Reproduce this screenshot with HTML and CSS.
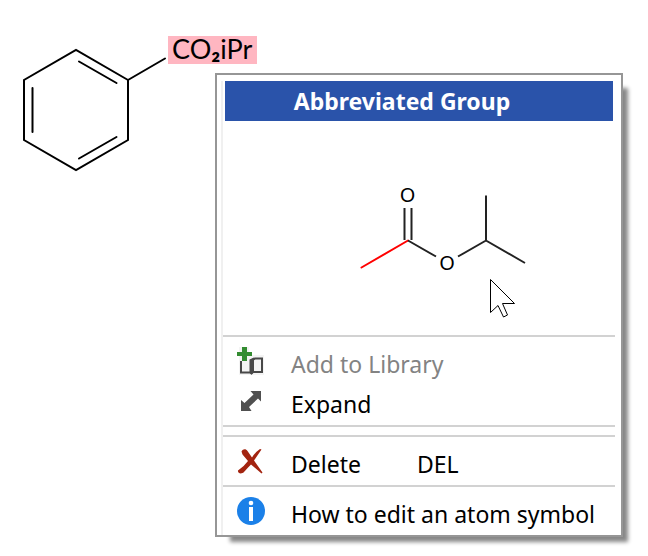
FILE: index.html
```html
<!DOCTYPE html>
<html lang="en">
<head>
<meta charset="utf-8">
<title>Structure editor</title>
<link rel="stylesheet" href="styles.css">
</head>
<body>
<main class="canvas">
  <svg class="molecule" width="270" height="190" viewBox="0 0 270 190" role="img" aria-label="Isopropyl benzoate">
    <rect class="highlight" x="168" y="36" width="89" height="28"/>
    <path class="bond" d="M128 80 76 50 24 80V140L76 170 128 140ZM128 80 165 58.500M116.500 83 79 61.500M32.500 88V132M79 158.500 116.500 137"/>
    <text class="group-label" x="172" y="59">CO<tspan class="subscript">₂</tspan>iPr</text>
  </svg>

  <div class="menu" role="menu" aria-labelledby="menu-title">
    <div class="menu-body">
      <h1 class="menu-title" id="menu-title">Abbreviated Group</h1>
      <div class="preview">
        <svg width="180" height="140" viewBox="355 180 180 140" role="img" aria-label="Isopropyl ester group">
          <path class="attachment" d="M361.500 267.500 408 240.500"/>
          <path class="preview-bond" d="M404.500 208V240M411.500 208V240M408 240.500 436 256.500M458 256.500 486 240.500M486 195.500V240.500L525 263"/>
          <text class="atom" x="407.500" y="202">O</text>
          <text class="atom" x="447" y="270">O</text>
          <path class="pointer" d="M490.500 279.500V312.500L498 305.500 503.500 317 507.500 315 502.500 303.500H514.500Z"/>
        </svg>
      </div>
      <hr class="separator">
      <button class="item" type="button" role="menuitem" disabled>
        <svg class="icon" width="28" height="28" viewBox="0 0 28 28" aria-hidden="true">
          <path fill="#f4f4f4" d="M2 0h10v8h15v20H2z"/>
          <path fill="none" stroke="#484848" stroke-width="2" d="M4 14V25.500H13L14.500 26.500 16 25H25V11.500H18L15 13"/>
          <path fill="#484848" d="M12.500 12.500 17 10.500V25L14.500 27.500 12.500 25z"/>
          <path fill="#338c31" d="M5 0h5v5h5v4h-5v5h-5v-5H0v-4h5z"/>
        </svg>
        <span>Add to Library</span>
      </button>
      <button class="item" type="button" role="menuitem">
        <svg class="icon" width="28" height="28" viewBox="0 0 28 28" aria-hidden="true">
          <path fill="#505050" d="M13.500 4H24V14.500L21 11.500 12 20 14.500 24H4V13L7.500 16 16.500 7.500Z"/>
        </svg>
        <span>Expand</span>
      </button>
      <hr class="separator">
      <hr class="separator">
      <button class="item" type="button" role="menuitem">
        <svg class="icon" width="28" height="28" viewBox="0 0 28 28" aria-hidden="true">
          <path fill="#a32410" d="M4.500 4.500C6 1.500 9 1.500 10.500 4L15 10.500Q18.500 5 23 2L24.500 2.500 17 13.500 25.500 25.500 24.500 26.500 14 17.500Q10.500 21 7 25C4.500 27.500 .5 26.500 1 23.500Q7 19.500 11 14L5.500 7.500Z"/>
        </svg>
        <span>Delete</span>
        <span class="shortcut">DEL</span>
      </button>
      <hr class="separator">
      <button class="item" type="button" role="menuitem">
        <svg class="icon" width="28" height="28" viewBox="0 0 28 28" aria-hidden="true">
          <circle cx="14" cy="14" r="14" fill="#1b80e8"/>
          <path fill="#fff" d="M12 10h4v14h-4z"/>
          <circle cx="14" cy="6" r="2.300" fill="#fff"/>
        </svg>
        <span class="wide">How to edit an atom symbol</span>
      </button>
    </div>
  </div>
</main>
</body>
</html>
```
FILE: styles.css
```css
* {
  box-sizing: border-box;
}

body {
  margin: 0;
  background: #fff;
  color: #000;
  font-family: "Noto Sans", "Open Sans", sans-serif;
}

.canvas {
  position: relative;
  min-height: 100vh;
}

.molecule {
  display: block;
}

.highlight {
  fill: #ffb6c1;
}

.bond,
.preview-bond,
.attachment {
  fill: none;
  stroke: #000;
  stroke-width: 2;
  stroke-linecap: round;
}

.preview-bond {
  stroke: #222;
  stroke-linecap: butt;
}

.attachment {
  stroke: #f00;
}

.group-label {
  font-family: Lato, sans-serif;
  font-size: 27px;
}

.subscript {
  font-weight: 700;
}

.atom {
  font-size: 20px;
  text-anchor: middle;
}

.pointer {
  fill: #fff;
  stroke: #000;
}

.menu {
  position: absolute;
  top: 73px;
  left: 215px;
  right: 25px;
  padding: 5px 6px 0 4px;
  border: 2px solid #969696;
  background: #fff;
  box-shadow: 10px 10px 4px -5px #888;
}

.menu-body {
  border-left: 2px solid #f0f0f0;
}

.menu-title {
  margin: 1px 2px 0;
  padding: 1px 34px 0 0;
  background: #2a53aa;
  color: #fff;
  font-size: 23px;
  font-weight: 700;
  line-height: 39px;
  text-align: center;
}

.preview {
  display: flex;
  justify-content: center;
  align-items: center;
  height: 214px;
  padding: 44px 0 0 52px;
}

.separator {
  height: 2px;
  margin: 0 0 8px;
  border: 0;
  background: #d2d2d2;
}

.item {
  display: grid;
  grid-template-columns: 68px 126px 1fr;
  align-items: center;
  width: 100%;
  height: 40px;
  padding: 0 0 2px;
  border: 0;
  background: none;
  color: inherit;
  font: inherit;
  font-size: 23px;
  line-height: 38px;
  text-align: left;
  white-space: nowrap;
}

.item:disabled {
  color: #838383;
}

.wide {
  grid-column: span 2;
}

.icon {
  margin: 0 0 6px 14px;
}
```
